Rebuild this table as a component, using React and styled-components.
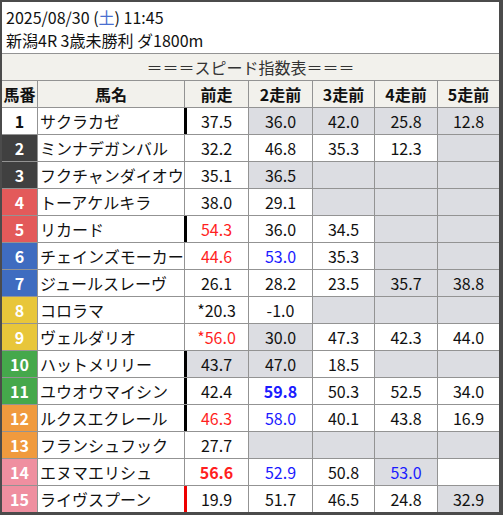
import React from 'react';
import styled, { createGlobalStyle } from 'styled-components';

const GlobalStyle = createGlobalStyle`
    html, body {
        margin: 0;
        padding: 0;
        background: #4b4b4b;
    }
    body {
        font-family: 'Noto Sans CJK JP', 'Noto Sans', sans-serif;
        color: #111;
    }
`;

const Frame = styled.div`
    width: 497px;
    margin: 2px 4px 3px 2px;
    background: #fff;
`;

const Header = styled.div`
    height: 51px;
    padding: 4px 0 0 4px;
    box-sizing: border-box;
    font-size: 16px;
    line-height: 23px;
    white-space: nowrap;
`;

const Sat = styled.span`
    color: #4a6fd0;
`;

const Grid = styled.div`
    display: grid;
    grid-template-columns: 35px 146px 63px 63px 61px 62px 61px;
    grid-auto-rows: 26px;
    gap: 1px;
    background: #939393;
    border-top: 1px solid #939393;
`;

const Title = styled.div`
    grid-column: 1 / -1;
    background: #f2f1ec;
    color: #333;
    font-size: 16px;
    display: flex;
    align-items: center;
    justify-content: center;
`;

const Head = styled.div`
    background: #f2f1ec;
    font-size: 16px;
    font-weight: bold;
    display: flex;
    align-items: center;
    justify-content: center;
`;

const Waku = styled.div`
    background: ${p => p.$bg};
    color: ${p => (p.$bg === '#ffffff' ? '#111' : '#fff')};
    font-size: 16px;
    font-weight: bold;
    display: flex;
    align-items: center;
    justify-content: center;
`;

const Name = styled.div`
    background: #fff;
    font-size: 16px;
    padding-left: 2px;
    display: flex;
    align-items: center;
    white-space: nowrap;
    overflow: hidden;
`;

const Cell = styled.div`
    background: ${p => (p.$gray ? '#dcdde2' : '#fff')};
    color: ${p => p.$color || '#111'};
    font-weight: ${p => (p.$bold ? 'bold' : 'normal')};
    font-size: 16px;
    display: flex;
    align-items: center;
    justify-content: center;
    box-shadow: ${p => (p.$mark ? `-1px 0 0 ${p.$mark}, inset 2px 0 0 ${p.$mark}` : 'none')};
`;

const WAKU = {
    1: '#ffffff',
    2: '#404040',
    3: '#404040',
    4: '#e35a5a',
    5: '#e35a5a',
    6: '#3f6cc0',
    7: '#3f6cc0',
    8: '#e8c63a',
    9: '#e8c63a',
    10: '#45a84b',
    11: '#45a84b',
    12: '#f09a3e',
    13: '#f09a3e',
    14: '#ef8fa0',
    15: '#ef8fa0',
};

const R = '#ff1f1f';
const B = '#1a1aff';

// each run: [value, gray, color, bold]
const horses = [
    { no: 1, name: 'サクラカゼ', mark: '#000', runs: [['37.5'], ['36.0', 1], ['42.0', 1], ['25.8', 1], ['12.8', 1]] },
    { no: 2, name: 'ミンナデガンバル', runs: [['32.2'], ['46.8'], ['35.3'], ['12.3'], ['', 1]] },
    { no: 3, name: 'フクチャンダイオウ', runs: [['35.1'], ['36.5', 1], ['', 1], ['', 1], ['', 1]] },
    { no: 4, name: 'トーアケルキラ', runs: [['38.0'], ['29.1'], ['', 1], ['', 1], ['', 1]] },
    { no: 5, name: 'リカード', mark: '#000', runs: [['54.3', 0, R], ['36.0'], ['34.5'], ['', 1], ['', 1]] },
    { no: 6, name: 'チェインズモーカー', runs: [['44.6', 0, R], ['53.0', 0, B], ['35.3'], ['', 1], ['', 1]] },
    { no: 7, name: 'ジュールスレーヴ', runs: [['26.1'], ['28.2'], ['23.5'], ['35.7', 1], ['38.8', 1]] },
    { no: 8, name: 'コロラマ', runs: [['*20.3'], ['-1.0'], ['', 1], ['', 1], ['', 1]] },
    { no: 9, name: 'ヴェルダリオ', runs: [['*56.0', 0, R], ['30.0', 1], ['47.3'], ['42.3'], ['44.0']] },
    { no: 10, name: 'ハットメリリー', mark: '#000', runs: [['43.7', 1], ['47.0', 1], ['18.5'], ['', 1], ['', 1]] },
    { no: 11, name: 'ユウオウマイシン', mark: '#000', runs: [['42.4'], ['59.8', 0, B, 1], ['50.3'], ['52.5'], ['34.0']] },
    { no: 12, name: 'ルクスエクレール', mark: '#000', runs: [['46.3', 0, R], ['58.0', 0, B], ['40.1'], ['43.8'], ['16.9']] },
    { no: 13, name: 'フランシュフック', runs: [['27.7'], ['', 1], ['', 1], ['', 1], ['', 1]] },
    { no: 14, name: 'エヌマエリシュ', runs: [['56.6', 0, R, 1], ['52.9', 0, B], ['50.8'], ['53.0', 1, B], ['']] },
    { no: 15, name: 'ライヴスプーン', mark: '#e00', runs: [['19.9'], ['51.7'], ['46.5'], ['24.8'], ['32.9', 1]] },
];

const heads = ['馬番', '馬名', '前走', '2走前', '3走前', '4走前', '5走前'];

const App = () => {
    return (
        <>
            <GlobalStyle />
            <Frame>
                <Header>
                    <div>2025/08/30 (<Sat>土</Sat>) 11:45</div>
                    <div>新潟4R 3歳未勝利 ダ1800m</div>
                </Header>
                <Grid>
                    <Title>＝＝＝スピード指数表＝＝＝</Title>
                    {heads.map(h => <Head key={h}>{h}</Head>)}
                    {horses.map(h => (
                        <React.Fragment key={h.no}>
                            <Waku $bg={WAKU[h.no]}>{h.no}</Waku>
                            <Name>{h.name}</Name>
                            {h.runs.map(([v, gray, color, bold], i) => (
                                <Cell
                                    key={i}
                                    $gray={gray}
                                    $color={color}
                                    $bold={bold}
                                    $mark={i === 0 ? h.mark : undefined}
                                >
                                    {v}
                                </Cell>
                            ))}
                        </React.Fragment>
                    ))}
                </Grid>
            </Frame>
        </>
    );
};

export default App;
